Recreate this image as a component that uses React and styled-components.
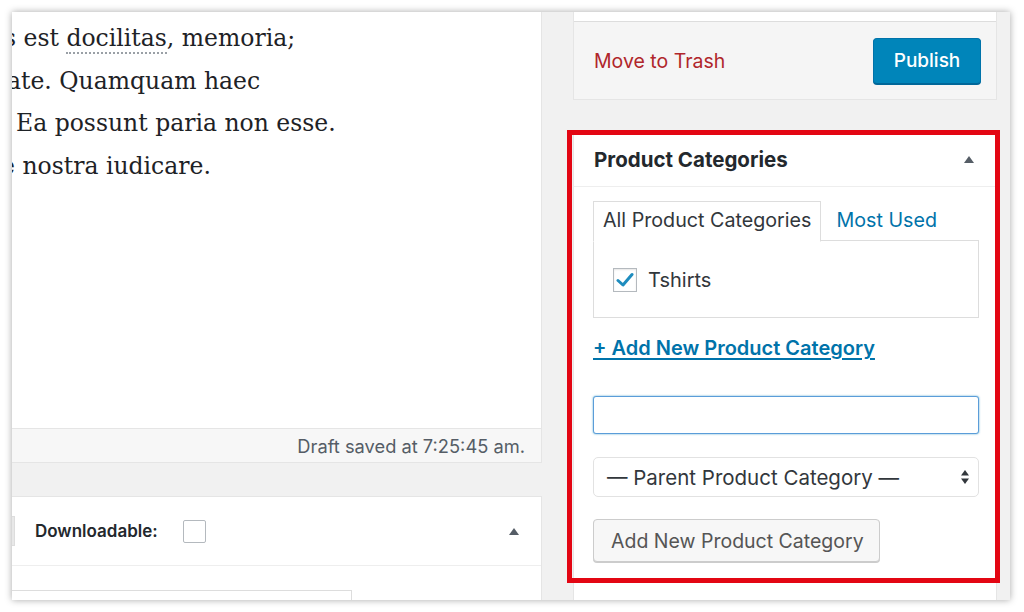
import React from "react";
import styled, { createGlobalStyle } from "styled-components";

const GlobalStyle = createGlobalStyle`
  html, body { margin: 0; padding: 0; background: #ffffff; }
  body { font-family: Inter, "Noto Sans", "Liberation Sans", sans-serif; color: #23282d; }
  * { box-sizing: border-box; }
`;

const Page = styled.div`
  padding: 12px;
  width: 1024px;
  height: 612px;
`;

const Frame = styled.div`
  width: 998px;
  height: 588px;
  overflow: hidden;
  background: #f1f1f1;
  box-shadow: 0 0 7px rgba(0, 0, 0, 0.35);
  display: grid;
  grid-template-columns: 530px 1fr;
`;

const LeftCol = styled.div`
  display: flex;
  flex-direction: column;
  gap: 33px;
  min-height: 0;
  overflow: hidden;
`;

const EditorPanel = styled.div`
  height: 451px;
  flex-shrink: 0;
  background: #fff;
  border-right: 1px solid #e5e5e5;
  display: flex;
  flex-direction: column;
`;

const EditorBody = styled.div`
  flex: 1;
  overflow: hidden;
  padding-top: 5px;
  font-family: "DejaVu Serif", "Liberation Serif", serif;
  font-size: 23.5px;
  line-height: 42.5px;
  color: #1e2226;
`;

const Line = styled.div`
  white-space: nowrap;
  margin-left: ${(p) => p.$shift}px;
`;

const Spell = styled.span`
  border-bottom: 2px dotted #9aa0a6;
`;

const StatusBar = styled.div`
  height: 35px;
  flex-shrink: 0;
  background: #f7f7f7;
  border-top: 1px solid #e5e5e5;
  border-bottom: 1px solid #e5e5e5;
  display: flex;
  align-items: center;
  justify-content: flex-end;
  padding-right: 16px;
  font-size: 18.3px;
  color: #555d66;
`;

const LowerBox = styled.div`
  flex: 1 0 auto;
  background: #fff;
  border-top: 1px solid #e5e5e5;
  border-right: 1px solid #e5e5e5;
  display: flex;
  flex-direction: column;
`;

const LowerHeader = styled.div`
  height: 69px;
  border-bottom: 1px solid #eee;
  display: flex;
  align-items: center;
  padding: 0 22px 0 0;
`;

const SelectStub = styled.div`
  width: 3px;
  height: 30px;
  background: #e8e8e8;
  border: 1px solid #ddd;
  border-left: none;
  margin-right: 20px;
`;

const FieldLabel = styled.span`
  font-size: 17px;
  font-weight: 600;
  color: #23282d;
`;

const SmallBox = styled.span`
  width: 23px;
  height: 23px;
  border: 1px solid #b4b9be;
  border-radius: 2px;
  margin-left: 25px;
  background: #fff;
`;

const Spacer = styled.div`
  flex: 1;
`;

const LowerBody = styled.div`
  padding-top: 24px;
`;

const StubInput = styled.div`
  width: 340px;
  height: 30px;
  border: 1px solid #ddd;
  border-left: none;
`;

const RightCol = styled.div`
  padding: 0 13px 0 31px;
  display: flex;
  flex-direction: column;
  gap: 31px;
  min-height: 0;
`;

const PublishBox = styled.div`
  height: 88px;
  flex-shrink: 0;
  border: 1px solid #e5e5e5;
  border-top: none;
  background: #f5f5f5;
  display: flex;
  flex-direction: column;
`;

const PublishTop = styled.div`
  height: 10px;
  background: #fff;
  border-bottom: 1px solid #ddd;
`;

const PublishActions = styled.div`
  flex: 1;
  display: flex;
  align-items: center;
  justify-content: space-between;
  padding: 0 15px 0 20px;
`;

const TrashLink = styled.a`
  color: #b0262b;
  font-size: 19.5px;
  text-decoration: none;
`;

const PrimaryButton = styled.button`
  height: 46px;
  width: 108px;
  background: #0085ba;
  border: 1px solid #0073aa;
  border-bottom-color: #006799;
  border-radius: 4px;
  box-shadow: 0 1px 0 #006799;
  color: #fff;
  font-family: inherit;
  font-size: 19px;
  font-weight: 500;
  padding: 0;
`;

const CatBox = styled.div`
  position: relative;
  flex: 1;
  background: #fff;
  border: 1px solid #e5e5e5;
  border-bottom: none;
  display: flex;
  flex-direction: column;
`;

const Highlight = styled.div`
  position: absolute;
  left: -7px;
  top: -2px;
  width: 433px;
  height: 453px;
  border: 5px solid #e30613;
  pointer-events: none;
`;

const CatHeader = styled.div`
  height: 55px;
  border-bottom: 1px solid #eee;
  display: flex;
  align-items: center;
  justify-content: space-between;
  padding: 0 22px 0 20px;
`;

const CatTitle = styled.h2`
  margin: 0;
  font-size: 20.5px;
  font-weight: 700;
  color: #23282d;
`;

const ToggleArrow = styled.span`
  width: 0;
  height: 0;
  border-left: 5px solid transparent;
  border-right: 5px solid transparent;
  border-bottom: 7px solid #555d66;
`;

const CatBody = styled.div`
  padding: 14px 0 0 19px;
  display: flex;
  flex-direction: column;
  align-items: flex-start;
`;

const Tabs = styled.div`
  display: flex;
  align-items: flex-start;
  height: 40px;
  margin-bottom: -1px;
  position: relative;
  z-index: 1;
`;

const Tab = styled.div`
  height: 41px;
  padding: 0 9px 3px;
  display: flex;
  align-items: center;
  font-size: 19.7px;
  color: ${(p) => (p.$active ? "#32373c" : "#0073aa")};
  background: ${(p) => (p.$active ? "#fff" : "transparent")};
  border: 1px solid ${(p) => (p.$active ? "#ddd" : "transparent")};
  border-bottom: 1px solid ${(p) => (p.$active ? "#fff" : "transparent")};
  margin-left: ${(p) => (p.$active ? 0 : 5)}px;
`;

const TabPanel = styled.div`
  width: 386px;
  height: 78px;
  border: 1px solid #ddd;
  background: #fff;
  display: flex;
  align-items: center;
  padding: 2px 0 0 19px;
  gap: 11px;
`;

const CheckBox = styled.span`
  width: 24px;
  height: 24px;
  border: 1px solid #b4b9be;
  background: #fff;
  display: flex;
  align-items: center;
  justify-content: center;
  box-shadow: inset 0 1px 2px rgba(0, 0, 0, 0.1);
`;

const CheckLabel = styled.span`
  font-size: 20px;
  color: #32373c;
`;

const AddLink = styled.a`
  margin-top: 18px;
  line-height: 24px;
  font-size: 20px;
  font-weight: 600;
  color: #0073aa;
  text-decoration: underline;
  text-underline-offset: 3px;
  text-decoration-thickness: 2px;
`;

const TextInput = styled.div`
  margin-top: 36px;
  width: 386px;
  height: 38px;
  border: 1px solid #5b9dd9;
  border-radius: 3px;
  box-shadow: 0 0 2px rgba(30, 140, 190, 0.8);
  background: #fff;
`;

const SelectBox = styled.div`
  margin-top: 23px;
  width: 386px;
  height: 40px;
  border: 1px solid #e2e2e2;
  border-radius: 5px;
  background: #fff;
  display: flex;
  align-items: center;
  justify-content: space-between;
  padding: 0 8px 0 13px;
  font-size: 20.5px;
  color: #32373c;
`;

const SecondaryButton = styled.button`
  margin-top: 22px;
  height: 43px;
  width: 287px;
  background: #f7f7f7;
  border: 1px solid #ccc;
  border-radius: 4px;
  box-shadow: 0 1px 0 #ccc;
  color: #555;
  font-family: inherit;
  font-size: 19.5px;
  text-align: left;
  padding: 0 0 0 17px;
`;

const Check = () => (
  <svg width="18" height="16" viewBox="0 0 18 16">
    <path d="M2 8.5 L7 13 L16 2.5" fill="none" stroke="#1e8cbe" strokeWidth="3" strokeLinecap="round" strokeLinejoin="round" />
  </svg>
);

const UpDown = () => (
  <svg width="10" height="16" viewBox="0 0 10 16">
    <path d="M5 1 L9 6.5 L1 6.5 Z" fill="#32373c" />
    <path d="M5 15 L9 9.5 L1 9.5 Z" fill="#32373c" />
  </svg>
);

export default function App() {
  return (
    <>
      <GlobalStyle />
      <Page>
        <Frame>
          <LeftCol>
            <EditorPanel>
              <EditorBody>
                <Line $shift={-8}>s est <Spell>docilitas</Spell>, memoria;</Line>
                <Line $shift={-5}>ate. Quamquam haec</Line>
                <Line $shift={4}>Ea possunt paria non esse.</Line>
                <Line $shift={-11}>e nostra iudicare.</Line>
              </EditorBody>
              <StatusBar>Draft saved at 7:25:45 am.</StatusBar>
            </EditorPanel>
            <LowerBox>
              <LowerHeader>
                <SelectStub />
                <FieldLabel>Downloadable:</FieldLabel>
                <SmallBox />
                <Spacer />
                <ToggleArrow />
              </LowerHeader>
              <LowerBody>
                <StubInput />
              </LowerBody>
            </LowerBox>
          </LeftCol>
          <RightCol>
            <PublishBox>
              <PublishTop />
              <PublishActions>
                <TrashLink>Move to Trash</TrashLink>
                <PrimaryButton>Publish</PrimaryButton>
              </PublishActions>
            </PublishBox>
            <CatBox>
              <CatHeader>
                <CatTitle>Product Categories</CatTitle>
                <ToggleArrow />
              </CatHeader>
              <CatBody>
                <Tabs>
                  <Tab $active>All Product Categories</Tab>
                  <Tab>Most Used</Tab>
                </Tabs>
                <TabPanel>
                  <CheckBox>
                    <Check />
                  </CheckBox>
                  <CheckLabel>Tshirts</CheckLabel>
                </TabPanel>
                <AddLink>+ Add New Product Category</AddLink>
                <TextInput />
                <SelectBox>
                  <span>— Parent Product Category —</span>
                  <UpDown />
                </SelectBox>
                <SecondaryButton>Add New Product Category</SecondaryButton>
              </CatBody>
              <Highlight />
            </CatBox>
          </RightCol>
        </Frame>
      </Page>
    </>
  );
}
